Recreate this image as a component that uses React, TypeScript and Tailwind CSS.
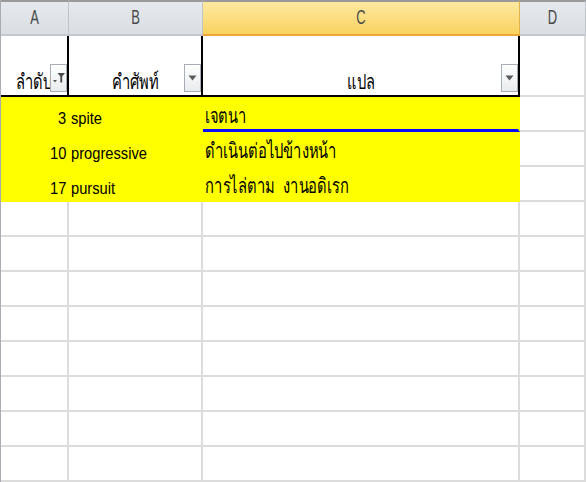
const cols = ["A", "B", "C", "D"]

const data: { no: string; word: string; meaning: string }[] = [
  { no: "3", word: "spite", meaning: "เจตนา" },
  { no: "10", word: "progressive", meaning: "ดำเนินต่อไปข้างหน้า" },
  { no: "17", word: "pursuit", meaning: "การไล่ตาม  งานอดิเรก" },
]

const emptyRows = 8

// Excel-ish text is tall and narrow in the shot, so squeeze it a bit
const latin = "inline-block scale-x-[0.89] text-[16.5px] leading-[16px]"
const thai = "inline-block scale-x-[0.7] text-[21px] font-medium leading-[16px] whitespace-pre"

function FilterButton({ active }: { active?: boolean }) {
  return (
    <div className="absolute right-0 top-[28px] flex h-[28px] w-[17px] items-center justify-center border border-[#a7aeb6] bg-gradient-to-b from-[#ffffff] to-[#e9ecef]">
      {active ? (
        <svg width="14" height="12" viewBox="0 0 14 12">
          <path d="M1 8 L5 8 L3 10.5 Z" fill="#5a5a5a" />
          <path d="M5.5 1 H13 L10.2 4.6 V10.5 H8.3 V4.6 Z" fill="#4a4a4a" />
        </svg>
      ) : (
        <svg width="9" height="6" viewBox="0 0 9 6">
          <path d="M0.5 0.5 H8.5 L4.5 5.5 Z" fill="#5b5b5b" />
        </svg>
      )}
    </div>
  )
}

export default function App() {
  return (
    <div className="h-[482px] w-[586px] overflow-hidden border-l border-[#a9adb3] bg-white font-['Liberation_Sans',sans-serif] text-black">
      <div className="grid grid-cols-[68px_134px_317px_66px]">
        {/* column letters */}
        {cols.map((c) => (
          <div
            key={c}
            className={
              c === "C"
                ? "flex h-[36px] items-center justify-center border-t-2 border-r border-b-2 border-t-[#9a9a9a] border-r-[#e2b34a] border-b-[#eea63a] bg-gradient-to-b from-[#fee9a0] to-[#f9d35e] text-[#4a4a4a]"
                : "flex h-[36px] items-center justify-center border-t-2 border-r border-b-2 border-t-[#9a9a9a] border-r-[#bfc4ca] border-b-[#c3c8ce] bg-gradient-to-b from-[#e6e9ed] to-[#dadee3] text-[#4a4a4a]"
            }
          >
            <span className="scale-y-150 text-[13px]">{c}</span>
          </div>
        ))}

        {/* header row */}
        <div className="relative flex h-[61px] items-end justify-center border-r-2 border-b-2 border-black pb-[5px]">
          <span className={`${thai} origin-center`}>ลำดับ</span>
          <FilterButton active />
        </div>
        <div className="relative flex h-[61px] items-end justify-center border-r-2 border-b-2 border-black pb-[5px]">
          <span className={`${thai} origin-center`}>คำศัพท์</span>
          <FilterButton />
        </div>
        <div className="relative flex h-[61px] items-end justify-center border-r-2 border-b-2 border-black pb-[5px]">
          <span className={`${thai} origin-center`}>แปล</span>
          <FilterButton />
        </div>
        <div className="h-[61px] border-r-2 border-b-2 border-[#dcdcdc]" />

        {/* data rows */}
        {data.map((r, i) => (
          <div key={r.word} className="contents">
            <div className="flex h-[35px] items-end justify-end border-r-2 border-b-2 border-[#ffff00] bg-[#ffff00] pr-[1px] pb-[4px]">
              <span className={`${latin} origin-right`}>{r.no}</span>
            </div>
            <div className="flex h-[35px] items-end border-r-2 border-b-2 border-[#ffff00] bg-[#ffff00] pl-[2px] pb-[4px]">
              <span className={`${latin} origin-left`}>{r.word}</span>
            </div>
            <div
              className={
                i === 0
                  ? "flex h-[35px] items-end border-r-2 border-b-[3px] border-r-[#ffff00] border-b-[#0a0aff] bg-[#ffff00] pl-[2px] pb-[5px]"
                  : "flex h-[35px] items-end border-r-2 border-b-2 border-[#ffff00] bg-[#ffff00] pl-[2px] pb-[6px]"
              }
            >
              <span className={`${thai} origin-left`}>{r.meaning}</span>
            </div>
            <div className="h-[35px] border-r-2 border-b-2 border-[#dcdcdc]" />
          </div>
        ))}

        {/* empty rows */}
        {Array.from({ length: emptyRows * 4 }).map((_, i) => (
          <div key={i} className="h-[35px] border-r-2 border-b-2 border-[#dcdcdc]" />
        ))}
      </div>
    </div>
  )
}
